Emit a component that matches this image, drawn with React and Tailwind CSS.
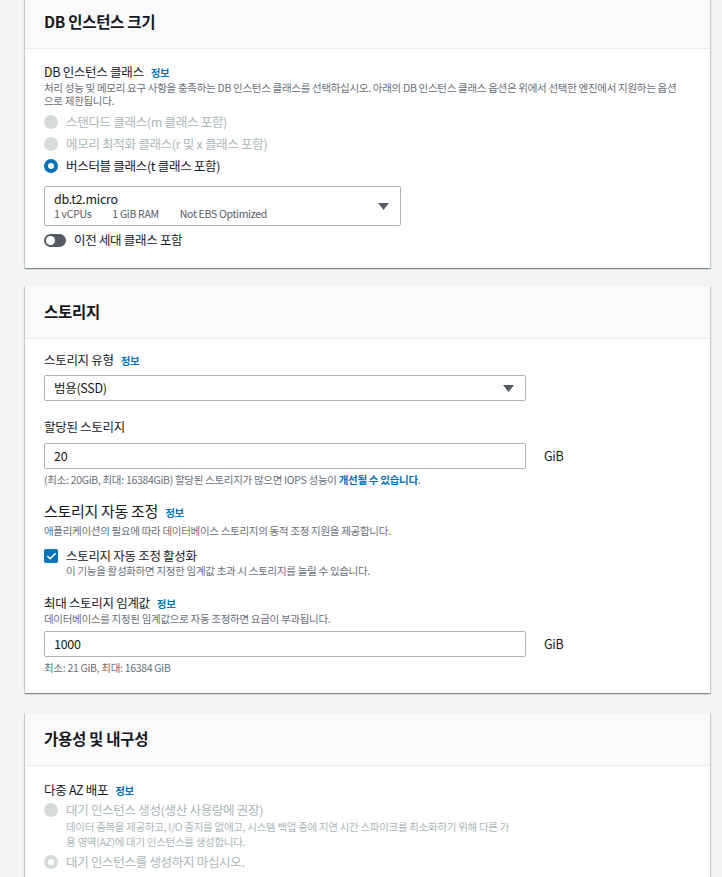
import { Check } from 'lucide-react'

const FONT = { fontFamily: '"Noto Sans CJK KR", "Noto Sans", sans-serif' }

function Info() {
  return <span className="ml-[7px] text-[10.5px] leading-[0] font-bold text-[#0073bb]">정보</span>
}

function Card({ title, children, className = '' }) {
  return (
    <div className={`bg-white shadow-[0_1px_1px_0_rgba(0,28,36,0.3),1px_1px_1px_0_rgba(0,28,36,0.15),-1px_1px_1px_0_rgba(0,28,36,0.15)] ${className}`}>
      <div className="h-[53px] flex items-center px-[19px] bg-[#fafafa] border-b border-[#eaeded]">
        <h2 className="text-[15.5px] tracking-[-0.3px] font-bold text-[#16191f]">{title}</h2>
      </div>
      {children}
    </div>
  )
}

function Radio({ state, label, children }) {
  // state: 'checked' | 'disabled' | 'disabled-checked'
  let dot = null
  if (state === 'checked') dot = <span className="w-[14px] h-[14px] rounded-full border-[4px] border-[#0073bb] bg-white" />
  if (state === 'disabled') dot = <span className="w-[14px] h-[14px] rounded-full bg-[#d5dbdb]" />
  if (state === 'disabled-checked') dot = <span className="w-[14px] h-[14px] rounded-full border-[4px] border-[#d5dbdb] bg-white" />
  const disabled = state !== 'checked'
  return (
    <div className="flex">
      <div className="w-[22px] h-[16px] flex items-center shrink-0">{dot}</div>
      <div>
        <div className={`text-[12.5px] tracking-[-0.3px] leading-[16px] ${disabled ? 'text-[#aab7b8]' : 'text-[#16191f]'}`}>{label}</div>
        {children}
      </div>
    </div>
  )
}

function Caret() {
  return (
    <svg width="11" height="7" viewBox="0 0 11 7">
      <path d="M0 0 H11 L5.5 7 Z" fill="#545b64" />
    </svg>
  )
}

export default function App() {
  return (
    <div className="min-h-[877px] bg-[#f2f3f3] pl-[25px] pr-[12px] overflow-hidden text-[#16191f] tracking-[-0.3px]" style={FONT}>
      <Card title="DB 인스턴스 크기" className="-mt-[4px]">
        <div className="pt-[15px] px-[19px] pb-[20px]">
          <div className="text-[12.5px] leading-[16px]">DB 인스턴스 클래스<Info /></div>
          <p className="mt-[1px] text-[10.5px] leading-[13px] text-[#687078]">
            <span className="whitespace-nowrap">처리 성능 및 메모리 요구 사항을 충족하는 DB 인스턴스 클래스를 선택하십시오. 아래의 DB 인스턴스 클래스 옵션은 위에서 선택한 엔진에서 지원하는 옵션</span><br />
            으로 제한됩니다.
          </p>
          <div className="mt-[4px] flex flex-col">
            <div className="h-[22px] flex items-center"><Radio state="disabled" label="스탠다드 클래스(m 클래스 포함)" /></div>
            <div className="h-[22px] flex items-center"><Radio state="disabled" label="메모리 최적화 클래스(r 및 x 클래스 포함)" /></div>
            <div className="h-[22px] flex items-center"><Radio state="checked" label="버스터블 클래스(t 클래스 포함)" /></div>
          </div>
          <div className="mt-[9px] w-[357px] h-[40px] border border-[#aab7b8] rounded-[2px] flex items-center justify-between pl-[9px] pr-[11px]">
            <div>
              <div className="text-[12.5px] leading-[16px]">db.t2.micro</div>
              <div className="flex gap-[21px] text-[10.5px] leading-[14px] text-[#545b64]">
                <span>1 vCPUs</span>
                <span>1 GiB RAM</span>
                <span>Not EBS Optimized</span>
              </div>
            </div>
            <Caret />
          </div>
          <div className="mt-[6px] h-[16px] flex items-center">
            <span className="w-[22px] h-[13px] rounded-full bg-[#545b64] flex items-center pl-[2px]">
              <span className="w-[9px] h-[9px] rounded-full bg-white" />
            </span>
            <span className="ml-[8px] text-[12.5px]">이전 세대 클래스 포함</span>
          </div>
        </div>
      </Card>

      <Card title="스토리지" className="mt-[18px]">
        <div className="pt-[13px] px-[19px] pb-[19px]">
          <div className="text-[12.5px] leading-[16px]">스토리지 유형<Info /></div>
          <div className="mt-[7px] w-[482px] h-[26px] border border-[#aab7b8] rounded-[2px] flex items-center justify-between pl-[9px] pr-[11px]">
            <span className="text-[12.5px]">범용(SSD)</span>
            <Caret />
          </div>
          <div className="mt-[18px] text-[12.5px] leading-[16px]">할당된 스토리지</div>
          <div className="mt-[8px] flex items-center">
            <div className="w-[482px] h-[26px] border border-[#aab7b8] rounded-[2px] flex items-center pl-[9px] text-[12.5px]">20</div>
            <span className="ml-[18px] text-[12.5px]">GiB</span>
          </div>
          <p className="mt-[4px] text-[10.5px] leading-[13px] text-[#687078]">
            (최소: 20GiB, 최대: 16384GiB) 할당된 스토리지가 많으면 IOPS 성능이 <span className="font-bold text-[#0073bb]">개선될 수 있습니다</span>.
          </p>
          <div className="mt-[15px] text-[15px] leading-[20px]">스토리지 자동 조정<Info /></div>
          <p className="mt-[3px] text-[10.5px] leading-[13px] text-[#687078]">애플리케이션의 필요에 따라 데이터베이스 스토리지의 동적 조정 지원을 제공합니다.</p>
          <div className="mt-[11px] flex">
            <div className="w-[22px] h-[16px] flex items-center">
              <span className="w-[14px] h-[14px] rounded-[2px] bg-[#0073bb] flex items-center justify-center">
                <Check size={11} strokeWidth={3.5} color="white" />
              </span>
            </div>
            <div>
              <div className="text-[12.5px] leading-[16px]">스토리지 자동 조정 활성화</div>
              <div className="text-[10.5px] leading-[14px] text-[#687078]">이 기능을 활성화하면 지정한 임계값 초과 시 스토리지를 늘릴 수 있습니다.</div>
            </div>
          </div>
          <div className="mt-[17px] text-[12.5px] leading-[16px]">최대 스토리지 임계값<Info /></div>
          <p className="mt-[1px] text-[10.5px] leading-[13px] text-[#687078]">데이터베이스를 지정된 임계값으로 자동 조정하면 요금이 부과됩니다.</p>
          <div className="mt-[6px] flex items-center">
            <div className="w-[482px] h-[26px] border border-[#aab7b8] rounded-[2px] flex items-center pl-[9px] text-[12.5px]">1000</div>
            <span className="ml-[18px] text-[12.5px]">GiB</span>
          </div>
          <p className="mt-[4px] text-[10.5px] leading-[13px] text-[#687078]">최소: 21 GiB, 최대: 16384 GiB</p>
        </div>
      </Card>

      <Card title="가용성 및 내구성" className="mt-[20px]">
        <div className="pt-[16px] px-[19px] pb-[20px]">
          <div className="text-[12.5px] leading-[16px]">다중 AZ 배포<Info /></div>
          <div className="mt-[4px]">
            <Radio state="disabled" label="대기 인스턴스 생성(생산 사용량에 권장)">
              <p className="mt-[1px] text-[10.5px] leading-[15px] text-[#aab7b8]">
                데이터 중복을 제공하고, I/O 중지를 없애고, 시스템 백업 중에 지연 시간 스파이크를 최소화하기 위해 다른 가<br />
                용 영역(AZ)에 대기 인스턴스를 생성합니다.
              </p>
            </Radio>
          </div>
          <div className="mt-[5px]">
            <Radio state="disabled-checked" label="대기 인스턴스를 생성하지 마십시오." />
          </div>
        </div>
      </Card>
    </div>
  )
}
